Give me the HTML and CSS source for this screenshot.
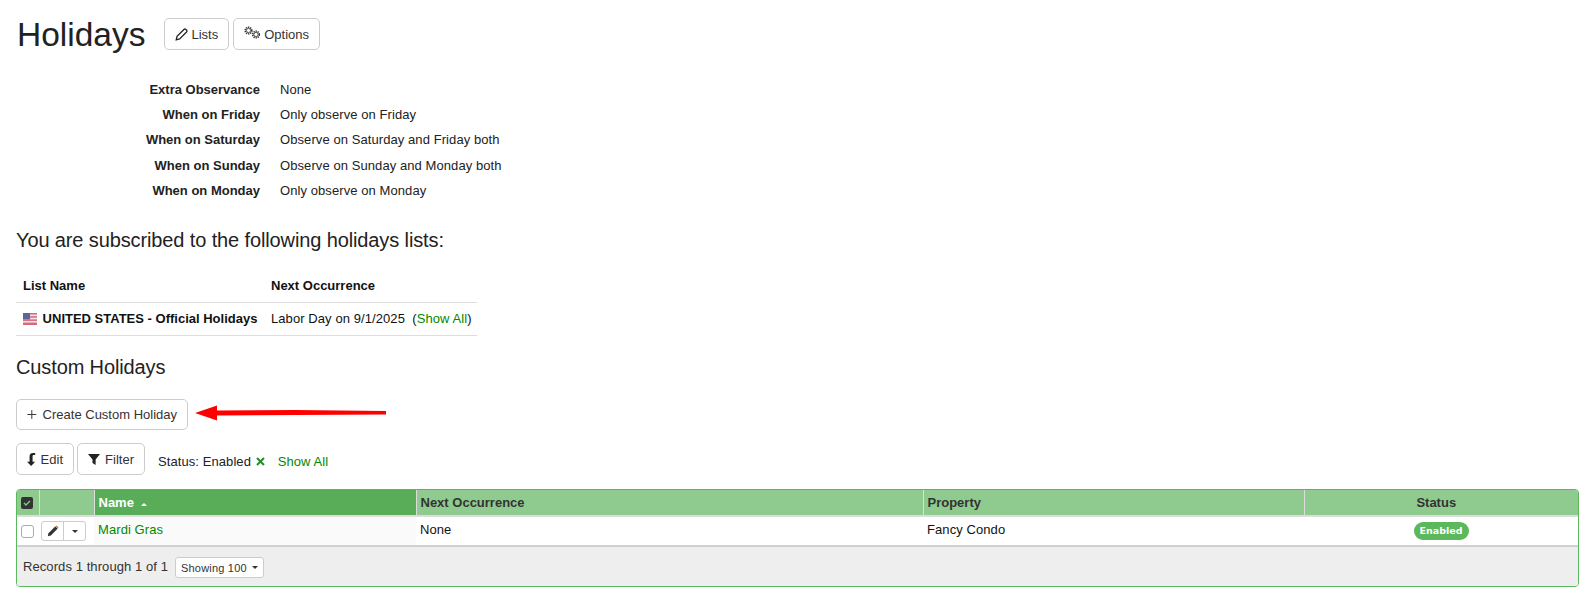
FILE: index.html
```html
<!DOCTYPE html>
<html lang="en">
<head>
    <meta charset="UTF-8">
    <title>Holidays</title>
    <link rel="stylesheet" href="styles.css">
</head>
<body>
    <div class="title-row">
        <h1>Holidays</h1>
        <button class="btn btn-top">
            <svg class="icon" viewBox="0 0 16 16"><path d="M1.500 14.500l1-4.200L11 1.800c.7-.7 1.700-.7 2.300-.1l1 1c.6.6.6 1.600-.1 2.300L5.700 13.500z" fill="none" stroke="#222" stroke-width="1.600"/></svg>
            Lists
        </button>
        <button class="btn btn-top">
            <svg class="icon icon-gears" viewBox="0 0 17 13">
                <circle cx="4.500" cy="4.500" r="3.300" fill="none" stroke="#333" stroke-width="1.600" stroke-dasharray="1.300 .8"/>
                <circle cx="4.500" cy="4.500" r="2.100" fill="none" stroke="#333" stroke-width=".8"/>
                <circle cx="12" cy="8.500" r="3.300" fill="none" stroke="#333" stroke-width="1.600" stroke-dasharray="1.300 .8"/>
                <circle cx="12" cy="8.500" r="2.100" fill="none" stroke="#333" stroke-width=".8"/>
            </svg>
            Options
        </button>
    </div>

    <dl class="settings">
        <div class="settings-row"><dt>Extra Observance</dt><dd>None</dd></div>
        <div class="settings-row"><dt>When on Friday</dt><dd>Only observe on Friday</dd></div>
        <div class="settings-row"><dt>When on Saturday</dt><dd>Observe on Saturday and Friday both</dd></div>
        <div class="settings-row"><dt>When on Sunday</dt><dd>Observe on Sunday and Monday both</dd></div>
        <div class="settings-row"><dt>When on Monday</dt><dd>Only observe on Monday</dd></div>
    </dl>

    <h2 class="subscribed">You are subscribed to the following holidays lists:</h2>

    <table class="lists-table">
        <thead>
            <tr><th class="list-col">List Name</th><th>Next Occurrence</th></tr>
        </thead>
        <tbody>
            <tr>
                <td class="list-name">
                    <svg class="flag" viewBox="0 0 14 12">
                        <rect width="14" height="12" fill="#efe3e8"/>
                        <rect y="0" width="14" height="1.500" fill="#d8697c"/>
                        <rect y="3.200" width="14" height="1.500" fill="#d8697c"/>
                        <rect y="6.400" width="14" height="1.500" fill="#d8697c"/>
                        <rect y="9.600" width="14" height="2.400" fill="#d8697c"/>
                        <rect width="7" height="6.400" fill="#5f6399"/>
                    </svg>
                    UNITED STATES - Official Holidays
                </td>
                <td>Labor Day on 9/1/2025 &nbsp;(<a href="#">Show All</a>)</td>
            </tr>
        </tbody>
    </table>

    <h3 class="custom-title">Custom Holidays</h3>

    <div class="create-row">
        <button class="btn btn-create">
            <svg class="icon icon-plus" viewBox="0 0 12 12"><path d="M6 .5v11M.5 6h11" stroke="#333" stroke-width="1.200" fill="none"/></svg>
            Create Custom Holiday
        </button>
        <svg class="arrow" viewBox="0 0 191 16"><path d="M0 8L22 0.500V5.500L100 5L191 6V9.500L100 10L22 10.500V15.500z" fill="#f00"/></svg>
    </div>

    <div class="filter-row">
        <button class="btn btn-edit">
            <svg class="icon icon-edit" viewBox="0 0 10 15"><path d="M9.500 2.300H8C7 2.300 6.500 2.900 6.500 3.800V10H9.500L4.800 15 0 10H3V3.500C3 1.300 4.700 0 7 0H9.500z" fill="#222"/></svg>
            Edit
        </button>
        <button class="btn btn-filter">
            <svg class="icon icon-filter" viewBox="0 0 14 13"><path d="M0 0h14L8.800 6.500V13L5.200 10.500V6.500z" fill="#222"/></svg>
            Filter
        </button>
        <span class="filter-status">Status: Enabled <svg class="filter-x" viewBox="0 0 9 9"><path d="M1 1l7 7M8 1L1 8" stroke="#2a8a2a" stroke-width="2" fill="none"/></svg></span>
        <a class="filter-all" href="#">Show All</a>
    </div>

    <div class="grid-panel">
        <table class="grid">
            <thead>
                <tr>
                    <th class="col-check"><span class="check-all"><svg viewBox="0 0 12 12"><path d="M3 6l2 2 4-4" fill="none" stroke="#7fc98a" stroke-width="1.400"/></svg></span></th>
                    <th class="col-actions"></th>
                    <th class="col-name sorted">Name <span class="sort-up"></span></th>
                    <th class="col-next">Next Occurrence</th>
                    <th class="col-prop">Property</th>
                    <th class="col-status">Status</th>
                </tr>
            </thead>
            <tbody>
                <tr>
                    <td class="col-check"><span class="check-box"></span></td>
                    <td class="col-actions">
                        <span class="split-btn">
                            <span class="split-main"><svg viewBox="0 0 14 14"><path d="M1 13l.7-3.500L9.500 1.700l2.800 2.800L4.500 12.300z" fill="#333"/><path d="M10 1.200c.6-.6 1.300-.6 1.800-.1l1.100 1.100c.5.500.5 1.200-.1 1.800l-.4.400-2.800-2.800z" fill="#c77a2e"/></svg></span>
                            <span class="split-caret"><span class="caret"></span></span>
                        </span>
                    </td>
                    <td class="col-name name-cell"><a href="#">Mardi Gras</a></td>
                    <td>None</td>
                    <td>Fancy Condo</td>
                    <td class="col-status"><span class="badge">Enabled</span></td>
                </tr>
            </tbody>
        </table>
        <div class="grid-footer">
            <span>Records 1 through 1 of 1</span>
            <span class="page-size">Showing 100 <span class="caret"></span></span>
        </div>
    </div>
</body>
</html>
```

FILE: styles.css
```css
* {
    box-sizing: border-box;
}
body {
    margin: 0;
    padding: 0 9px 0 16px;
    font-family: "Liberation Sans", Arial, sans-serif;
    font-size: 13px;
    letter-spacing: 0.08px;
    color: #222;
    background: #fff;
}
a {
    color: #008a00;
    text-decoration: none;
}
th, dt, .list-name {
    letter-spacing: 0;
}
.title-row {
    display: flex;
    align-items: center;
    height: 68px;
    gap: 4px;
}
h1 {
    margin: 1px 15px 0 1px;
    font-size: 33.5px;
    font-weight: 400;
    letter-spacing: 0;
}
.btn {
    display: inline-flex;
    align-items: center;
    gap: 4px;
    height: 32px;
    padding: 0 10px;
    background: #fff;
    border: 1px solid #ccc;
    border-radius: 5px;
    font-family: inherit;
    font-size: 13px;
    letter-spacing: 0;
    color: #333;
    white-space: nowrap;
}
.btn-top {
    padding: 0 10px 0 10px;
    gap: 3px;
}
.icon {
    width: 13px;
    height: 13px;
}
.icon-gears {
    width: 17px;
    margin-top: -3px;
}
.settings {
    margin: 9px 0 0;
}
.settings-row {
    display: flex;
    height: 25.2px;
    align-items: center;
}
.settings dt {
    width: 244px;
    text-align: right;
    font-weight: 700;
}
.settings dd {
    margin: 0 0 0 20px;
}
.subscribed {
    margin: 23px 0 0;
    font-size: 20px;
    line-height: 28px;
    font-weight: 400;
    letter-spacing: -0.12px;
}
.lists-table {
    margin-top: 16px;
    border-collapse: collapse;
    width: 461px;
    color: #111;
}
.lists-table th, .lists-table td {
    height: 33px;
    padding: 0 4px 2px 7px;
    text-align: left;
    white-space: nowrap;
    border-bottom: 1px solid #ddd;
}
.lists-table .list-col {
    width: 248px;
}
.list-name {
    font-weight: 700;
}
.flag {
    width: 14px;
    height: 12px;
    margin-right: 2px;
    vertical-align: -2px;
}
.custom-title {
    margin: 18px 0 0;
    font-size: 20px;
    line-height: 26px;
    font-weight: 400;
    letter-spacing: -0.12px;
}
.create-row {
    display: flex;
    align-items: center;
    margin-top: 19px;
}
.btn-create {
    width: 172px;
    height: 31px;
    padding: 0 10px;
    gap: 6px;
}
.icon-plus {
    width: 11px;
    height: 11px;
}
.arrow {
    width: 191px;
    height: 16px;
    margin: -4px 0 0 7px;
}
.filter-row {
    display: flex;
    align-items: center;
    margin-top: 13px;
    gap: 3px;
}
.btn-edit {
    width: 58px;
    gap: 5px;
}
.btn-filter {
    width: 68px;
    gap: 5px;
}
.icon-edit {
    width: 10px;
    height: 15px;
}
.icon-filter {
    width: 14px;
}
.filter-status {
    margin-left: 10px;
    padding-top: 4px;
    color: #222;
}
.filter-x {
    width: 9px;
    height: 9px;
    margin-left: 1px;
}
.filter-all {
    margin-left: 10px;
    padding-top: 4px;
}
.grid-panel {
    margin-top: 14px;
    border: 1px solid #5cb85c;
    border-radius: 4px;
    overflow: hidden;
}
.grid {
    width: 100%;
    border-collapse: collapse;
    table-layout: fixed;
    color: #111;
}
.grid th {
    height: 26px;
    padding: 0 4px;
    text-align: left;
    background: #8fcb8f;
    color: #333;
    border-right: 1px solid #ddd;
    border-bottom: 2px solid #ddd;
}
.grid th:last-child {
    border-right: 0;
}
.grid th.sorted {
    background: #59ad59;
    color: #fff;
}
.grid td {
    height: 30px;
    padding: 0 4px 4px;
    border-bottom: 2px solid #d0d0d0;
}
.col-check {
    width: 22px;
}
.col-actions {
    width: 55px;
}
.col-name {
    width: 322px;
}
.col-next {
    width: 507px;
}
.col-prop {
    width: 381px;
}
.grid .col-status {
    text-align: center;
}
.grid th.col-status {
    padding-right: 14px;
}
.grid th.col-check {
    padding: 0 0 0 4px;
}
.grid td.col-check {
    padding: 0 0 0 4px;
}
.grid td.col-actions {
    padding: 0 0 0 2px;
}
.grid td.col-status {
    padding: 0;
}
.name-cell {
    background: #fafafa;
}
.check-all {
    display: block;
    width: 12px;
    height: 12px;
    background: #333;
    border-radius: 2px;
}
.check-all svg {
    display: block;
}
.check-box {
    display: block;
    width: 13px;
    height: 13px;
    margin-top: 1px;
    background: #fff;
    border: 1px solid #aaa;
    border-radius: 3px;
}
.split-btn {
    display: flex;
    width: 45px;
    height: 20px;
    border: 1px solid #ccc;
    border-radius: 3px;
    background: #fff;
}
.split-main {
    display: flex;
    align-items: center;
    justify-content: center;
    width: 22px;
    border-right: 1px solid #ccc;
}
.split-main svg {
    width: 12px;
    height: 12px;
}
.split-caret {
    display: flex;
    align-items: center;
    justify-content: center;
    flex: 1;
}
.caret {
    display: inline-block;
    width: 0;
    height: 0;
    border-left: 3px solid transparent;
    border-right: 3px solid transparent;
    border-top: 3px solid #333;
    vertical-align: middle;
}
.sort-up {
    display: inline-block;
    width: 0;
    height: 0;
    margin-left: 3px;
    border-left: 3px solid transparent;
    border-right: 3px solid transparent;
    border-bottom: 3px solid #fff;
    vertical-align: middle;
}
.badge {
    display: inline-block;
    width: 55px;
    height: 18px;
    line-height: 17px;
    text-align: center;
    background: #5cb85c;
    color: #fff;
    border-radius: 9px;
    font-size: 9.5px;
    font-weight: 700;
    font-family: "DejaVu Sans", sans-serif;
    letter-spacing: 0;
}
.grid-footer {
    display: flex;
    align-items: center;
    gap: 7px;
    height: 39px;
    padding: 0 6px;
    background: #eee;
    color: #333;
}
.page-size {
    display: inline-flex;
    align-items: center;
    gap: 5px;
    height: 21px;
    margin-top: 2px;
    padding: 0 5px;
    background: #fff;
    border: 1px solid #ccc;
    border-radius: 3px;
    font-size: 11px;
    letter-spacing: 0.2px;
}
```
